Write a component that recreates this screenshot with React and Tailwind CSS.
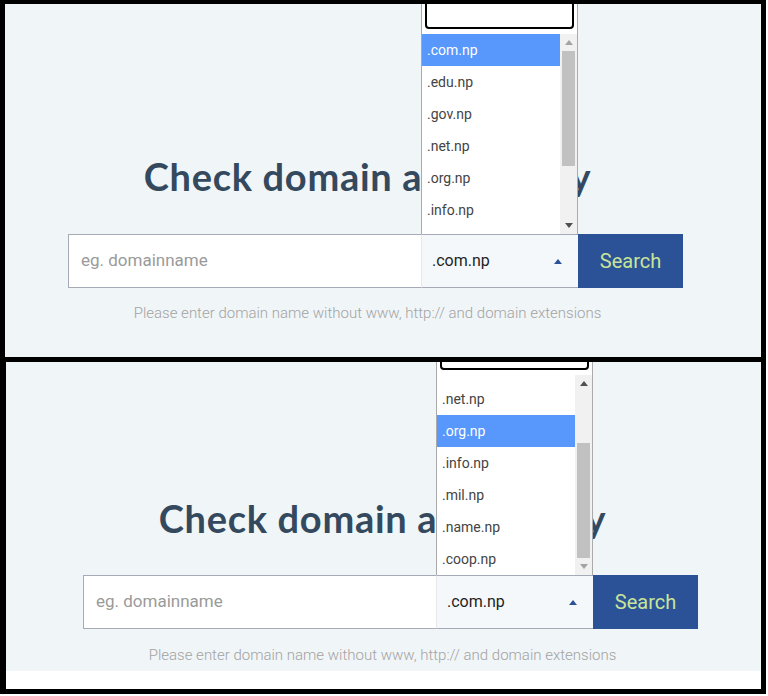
import React from "react";

const domains = [
  ".com.np",
  ".edu.np",
  ".gov.np",
  ".net.np",
  ".org.np",
  ".info.np",
  ".mil.np",
  ".name.np",
  ".coop.np",
];

const Arrow = ({ up, dark }) => (
  <svg width="8" height="5" viewBox="0 0 8 5">
    <path
      d={up ? "M0 5 L4 0 L8 5 Z" : "M0 0 L8 0 L4 5 Z"}
      fill={dark ? "#505050" : "#a3a3a3"}
    />
  </svg>
);

// hand drawn scrollbar so both shots look the same
const Scrollbar = ({ scrolled }) => (
  <div className="w-[17px] h-[200px] bg-[#f1f1f1] flex flex-col">
    <div className="h-[17px] flex items-center justify-center">
      <Arrow up dark={scrolled} />
    </div>
    <div className="flex-1">
      <div
        className={`h-[115px] mx-[2px] bg-[#c1c1c1] ${scrolled ? "mt-[51px]" : ""}`}
      />
    </div>
    <div className="h-[17px] flex items-center justify-center">
      <Arrow dark={!scrolled} />
    </div>
  </div>
);

const Dropdown = ({ selected, scrolled }) => (
  <div className="absolute -left-[1px] -top-[1px] -translate-y-full w-[157px] bg-white border-x border-t border-[#aaaaaa]">
    <div className="px-[3px] pt-[4px] pb-[5px]">
      <div className="h-[28px] rounded-[4px] border-2 border-black bg-white" />
    </div>
    <div className="flex h-[200px]">
      <div className="flex-1 h-[200px] overflow-hidden">
        <ul className={scrolled ? "-mt-[88px]" : ""}>
          {domains.map((d) => (
            <li
              key={d}
              className={`h-[32px] flex items-center px-[5px] text-[14px] ${
                d === selected ? "bg-[#5897fb] text-white" : "text-[#444444]"
              }`}
            >
              {d}
            </li>
          ))}
        </ul>
      </div>
      <Scrollbar scrolled={scrolled} />
    </div>
  </div>
);

const SearchForm = ({ wrapClass, rowClass, helpClass, selected, scrolled }) => (
  <div className={wrapClass}>
    <h1
      className="text-center text-[38px] leading-[40px] font-bold tracking-[0.7px] text-[#34495e]"
      style={{ fontFamily: "Lato, sans-serif" }}
    >
      Check domain availability
    </h1>
    <div className={`flex h-[54px] ${rowClass}`}>
      <div className="w-[353px] h-[54px] bg-white border border-r-0 border-[#a6a9b6] flex items-center pl-[12px]">
        <span className="text-[17px] text-[#9a9a9a]">eg. domainname</span>
      </div>
      <div className="relative w-[157px] h-[54px] bg-[#f5f8fa] border-y border-y-[#a6a9b6] border-l border-l-[#e6e8eb] flex items-center justify-between pl-[10px] pr-[16px]">
        <span className="text-[16px] text-[#1f1f1f]">.com.np</span>
        <svg width="8" height="5" viewBox="0 0 8 5">
          <path d="M0 5 L4 0 L8 5 Z" fill="#2b5296" />
        </svg>
        <Dropdown selected={selected} scrolled={scrolled} />
      </div>
      <button className="w-[105px] h-[54px] bg-[#2b5296] text-[20px] text-[#c9e49a]">
        Search
      </button>
    </div>
    <p className={`text-center text-[15px] leading-[20px] font-light text-[#a3a3a3] ${helpClass}`}>
      Please enter domain name without www, http:// and domain extensions
    </p>
  </div>
);

export default function App() {
  return (
    <div
      className="w-[768px] h-[696px] bg-white"
      style={{ fontFamily: "Roboto, 'Liberation Sans', sans-serif" }}
    >
      {/* first shot: list at the top */}
      <div className="w-[766px] h-[362px] border-black border-t-4 border-x-[5px] border-b-[5px] bg-[#f0f5f8] overflow-hidden">
        <SearchForm
          wrapClass="w-[725px] pt-[152px]"
          rowClass="ml-[63px] mt-[38px]"
          helpClass="mt-[15px]"
          selected=".com.np"
          scrolled={false}
        />
      </div>

      {/* second shot: list scrolled to the end */}
      <div className="w-[766px] h-[332px] border-black border-l-[6px] border-r-[5px] border-b-[5px] bg-white overflow-hidden">
        <div className="h-[309px] bg-[#f0f5f8]">
          <SearchForm
            wrapClass="w-[753px] pt-[136px]"
            rowClass="ml-[77px] mt-[37px]"
            helpClass="mt-[16px]"
            selected=".org.np"
            scrolled
          />
        </div>
      </div>
    </div>
  );
}
